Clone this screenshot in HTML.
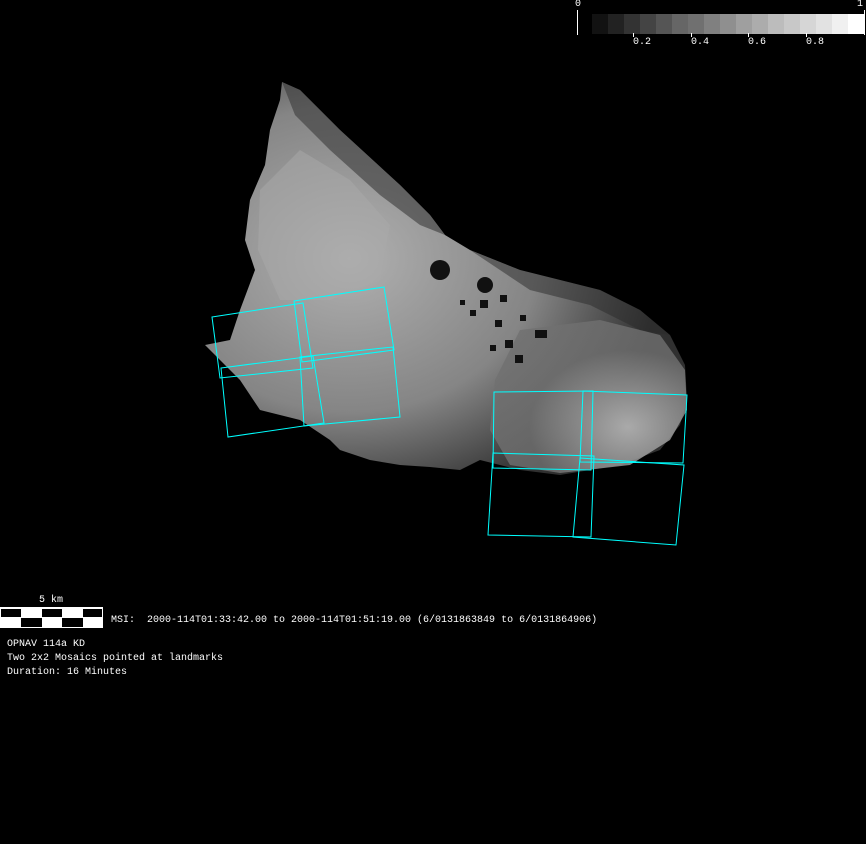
<!DOCTYPE html>
<html><head><meta charset="utf-8"><style>
html,body{margin:0;padding:0;background:#000;width:866px;height:844px;overflow:hidden}
.t{position:absolute;color:#fff;font-family:"Liberation Mono","DejaVu Sans Mono",monospace;font-size:10px;line-height:14px;white-space:pre}
</style></head><body>
<svg width="866" height="844" style="position:absolute;left:0;top:0">
<defs>
<radialGradient id="g1" cx="0.3" cy="0.45" r="0.65"><stop offset="0" stop-color="#b0b0b0"/><stop offset="0.6" stop-color="#858585"/><stop offset="1" stop-color="#303030"/></radialGradient>
<radialGradient id="g2" cx="0.7" cy="0.7" r="0.5"><stop offset="0" stop-color="#c8c8c8"/><stop offset="1" stop-color="#707070"/></radialGradient>
</defs>
<polygon fill="url(#g1)" points="282,82 300,90 340,130 400,185 430,215 445,235 470,250 520,270 560,280 600,290 640,310 670,335 685,365 687,400 680,425 660,450 620,465 560,475 520,470 480,460 460,470 430,467 400,465 370,460 340,450 330,440 300,420 260,410 240,380 215,355 205,345 230,340 240,310 255,270 245,240 250,200 265,165 270,130 280,100"/>
<polygon fill="url(#g2)" opacity="0.8" points="520,330 600,320 660,335 685,370 687,410 670,440 630,465 560,473 510,465 490,430 495,380"/>
<polygon fill="#aaaaaa" opacity="0.5" points="260,190 300,150 350,180 390,225 380,280 330,300 280,300 258,250"/>
<polygon fill="#3a3a3a" opacity="0.6" points="282,82 300,90 340,130 400,185 430,215 445,235 420,225 380,195 330,150 295,115"/>
<polygon fill="#2a2a2a" opacity="0.5" points="470,250 520,270 560,280 600,290 640,310 670,335 640,330 590,305 530,290"/>
<g fill="#111">
<circle cx="440" cy="270" r="10"/><circle cx="485" cy="285" r="8"/><rect x="480" y="300" width="8" height="8"/><rect x="495" y="320" width="7" height="7"/><rect x="505" y="340" width="8" height="8"/><rect x="470" y="310" width="6" height="6"/><rect x="535" y="330" width="12" height="8"/><rect x="500" y="295" width="7" height="7"/>
<rect x="515" y="355" width="8" height="8"/><rect x="490" y="345" width="6" height="6"/><rect x="460" y="300" width="5" height="5"/><rect x="520" y="315" width="6" height="6"/>
</g>
<g fill="none" stroke="#00ffff" stroke-width="1">
<polygon points="212,317 303,303 313,368 220,378"/>
<polygon points="294,301 384,287 394,350 302,362"/>
<polygon points="221,368 313,356 324,423 228,437"/>
<polygon points="300,357 393,347 400,417 304,426"/>
<polygon points="494,392 593,391 591,470 493,468"/>
<polygon points="583,391 687,395 683,463 580,462"/>
<polygon points="493,453 594,456 591,537 488,535"/>
<polygon points="580,458 684,465 676,545 573,537"/>
</g>
<line x1="577.5" y1="10" x2="577.5" y2="35" stroke="#fff"/>
<g>
<rect x="592" y="14" width="16" height="20" fill="#121212"/><rect x="608" y="14" width="16" height="20" fill="#222"/><rect x="624" y="14" width="16" height="20" fill="#333"/><rect x="640" y="14" width="16" height="20" fill="#444"/><rect x="656" y="14" width="16" height="20" fill="#555"/><rect x="672" y="14" width="16" height="20" fill="#666"/><rect x="688" y="14" width="16" height="20" fill="#707070"/><rect x="704" y="14" width="16" height="20" fill="#808080"/><rect x="720" y="14" width="16" height="20" fill="#8f8f8f"/><rect x="736" y="14" width="16" height="20" fill="#9f9f9f"/><rect x="752" y="14" width="16" height="20" fill="#acacac"/><rect x="768" y="14" width="16" height="20" fill="#bcbcbc"/><rect x="784" y="14" width="16" height="20" fill="#c8c8c8"/><rect x="800" y="14" width="16" height="20" fill="#d6d6d6"/><rect x="816" y="14" width="16" height="20" fill="#e2e2e2"/><rect x="832" y="14" width="16" height="20" fill="#f0f0f0"/><rect x="848" y="14" width="16" height="20" fill="#fff"/>
</g>
<line x1="864.5" y1="10" x2="864.5" y2="35" stroke="#fff"/>
<g stroke="#fff"><line x1="633.5" y1="33" x2="633.5" y2="37"/><line x1="691.5" y1="33" x2="691.5" y2="37"/><line x1="748.5" y1="33" x2="748.5" y2="37"/><line x1="806.5" y1="33" x2="806.5" y2="37"/></g>
<rect x="0" y="607" width="103" height="21" fill="#fff"/>
<g fill="#000">
<rect x="1" y="609" width="20" height="8"/><rect x="42" y="609" width="20" height="8"/><rect x="83" y="609" width="19" height="8"/>
<rect x="21" y="618" width="21" height="9"/><rect x="62" y="618" width="21" height="9"/>
</g>
</svg>
<div class="t" style="left:575px;top:-2px">0</div>
<div class="t" style="left:857px;top:-2px">1</div>
<div class="t" style="left:633px;top:36px">0.2</div>
<div class="t" style="left:691px;top:36px">0.4</div>
<div class="t" style="left:748px;top:36px">0.6</div>
<div class="t" style="left:806px;top:36px">0.8</div>
<div class="t" style="left:39px;top:594px">5 km</div>
<div class="t" style="left:111px;top:614px">MSI:  2000-114T01:33:42.00 to 2000-114T01:51:19.00 (6/0131863849 to 6/0131864906)</div>
<div class="t" style="left:7px;top:638px">OPNAV 114a KD
Two 2x2 Mosaics pointed at landmarks
Duration: 16 Minutes</div>
</body></html>
